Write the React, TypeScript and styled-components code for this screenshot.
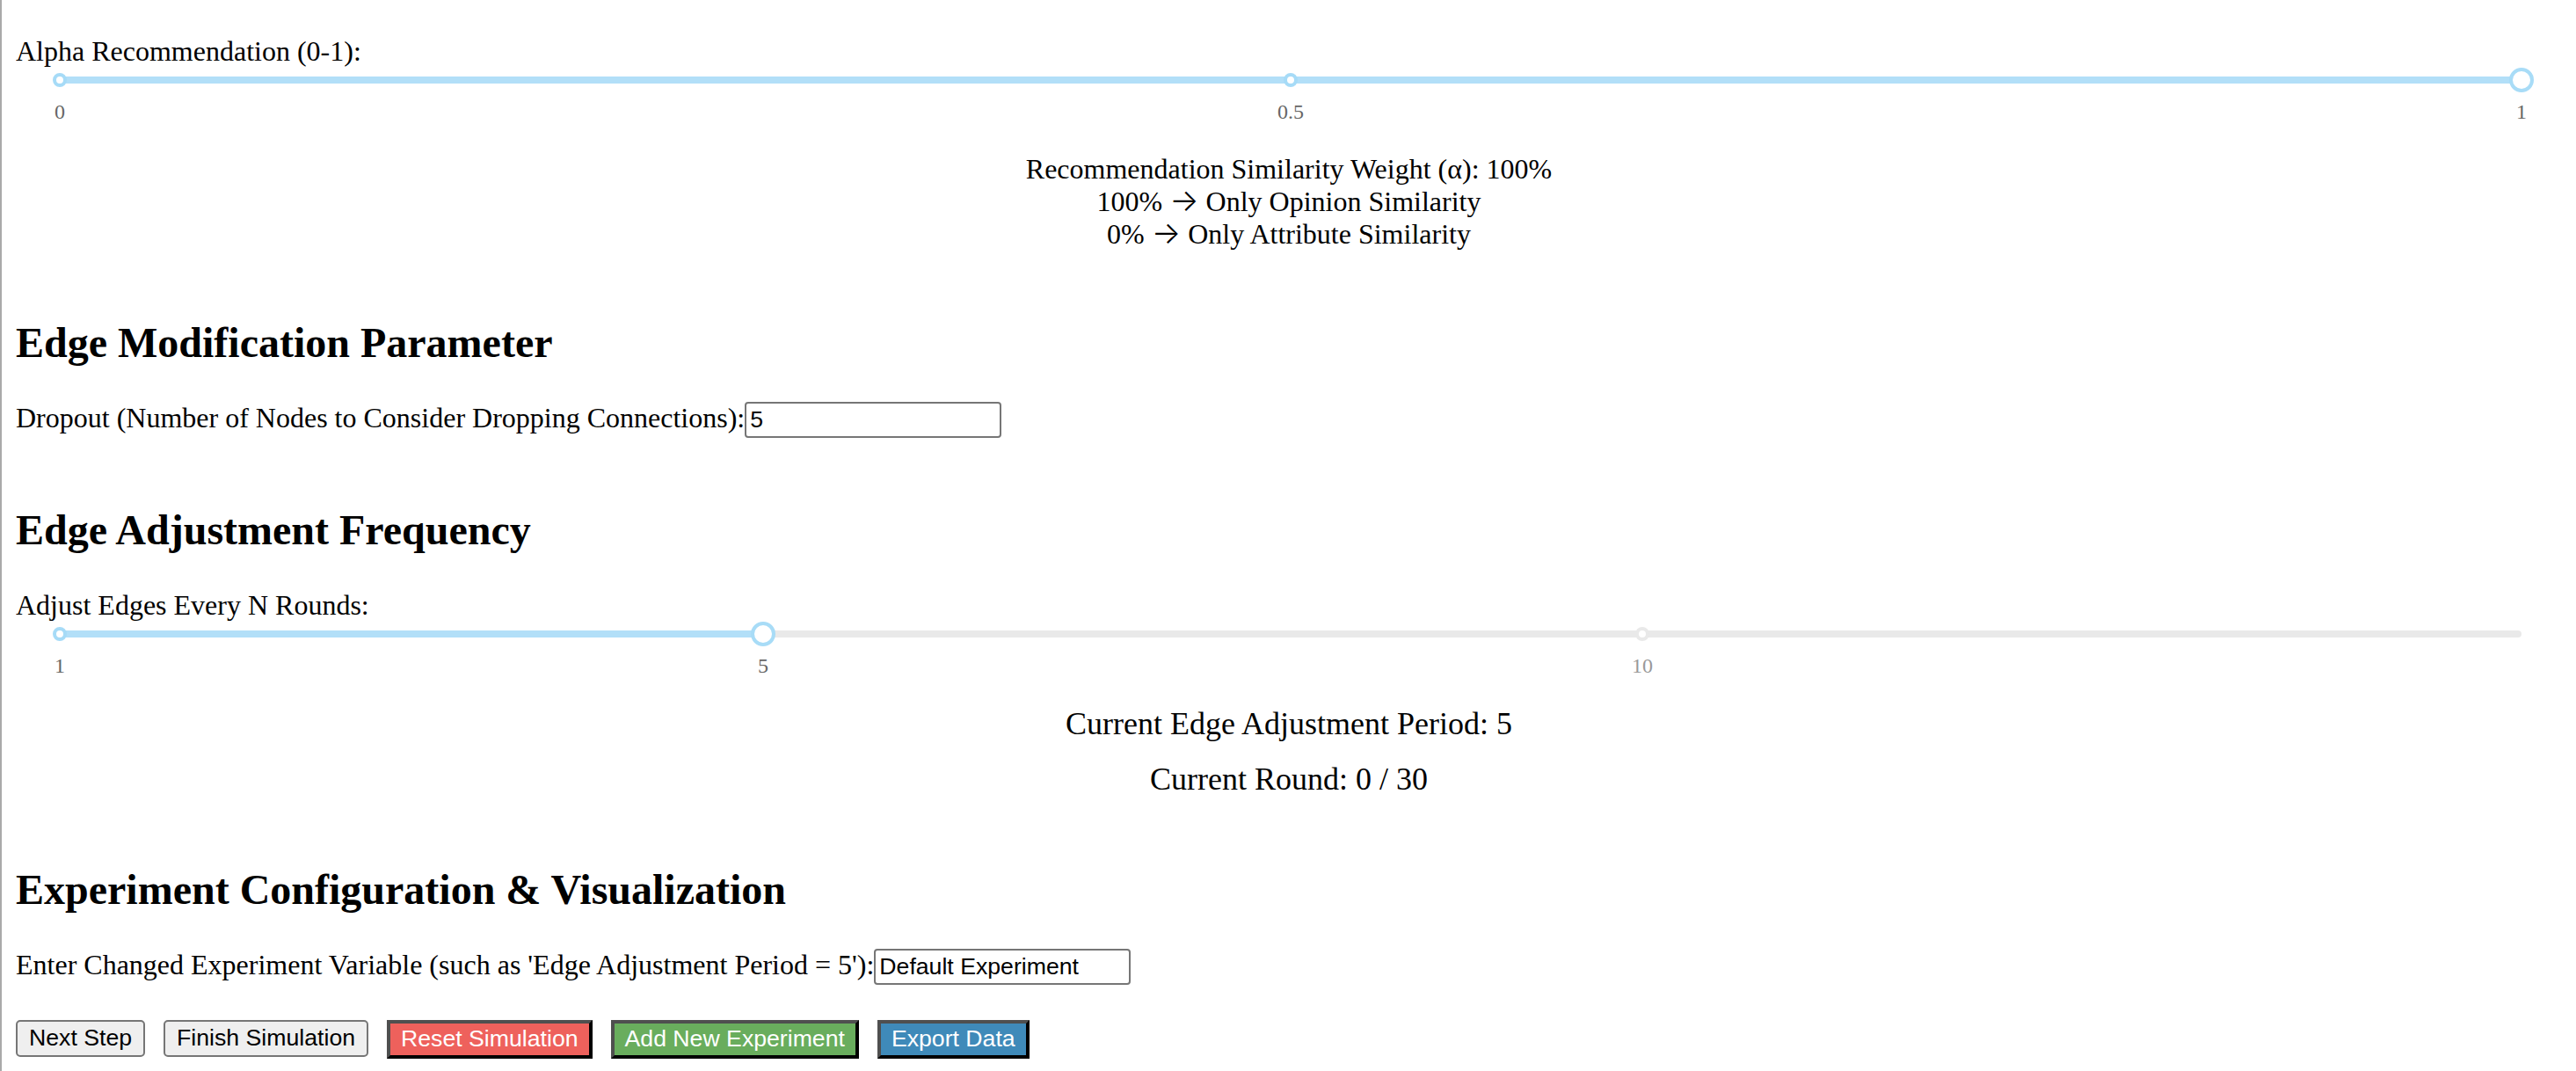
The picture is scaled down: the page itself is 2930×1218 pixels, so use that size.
import React from 'react'
import styled, { createGlobalStyle, css } from 'styled-components'

const GlobalStyle = createGlobalStyle`
  html {
    border-left: 2px solid #a9a9a9;
    background: #fff;
  }
  body {
    margin: 16px;
    font-family: "Liberation Serif", "Times New Roman", serif;
    font-size: 32px;
    color: #000;
  }
`

const Page = styled.div`
  padding-top: 24px;
`

const FieldLabel = styled.label`
  display: block;
  font-size: 32px;
  line-height: normal;
`

const SliderRoot = styled.div`
  position: relative;
  box-sizing: border-box;
  height: 28px;
  padding: 10px 0;
  margin: 0 46px 0 50px;
`

const Rail = styled.div`
  position: absolute;
  left: 0;
  right: 0;
  top: 10px;
  height: 8px;
  border-radius: 12px;
  background: #e9e9e9;
`

const Track = styled.div`
  position: absolute;
  left: 0;
  top: 10px;
  height: 8px;
  border-radius: 12px;
  background: #b2dff8;
`

const Dot = styled.span<{ $active: boolean }>`
  position: absolute;
  top: 6px;
  width: 16px;
  height: 16px;
  margin-left: -8px;
  box-sizing: border-box;
  border-radius: 50%;
  background: #fff;
  border: 4px solid ${(p) => (p.$active ? '#a6dbf7' : '#e9e9e9')};
`

const Handle = styled.div`
  position: absolute;
  top: 0;
  width: 28px;
  height: 28px;
  margin-left: -14px;
  box-sizing: border-box;
  border-radius: 50%;
  background: #fff;
  border: 4px solid #a8dcf7;
`

const MarkText = styled.span<{ $active: boolean }>`
  position: absolute;
  top: 37px;
  transform: translateX(-50%);
  font-size: 24px;
  line-height: normal;
  color: ${(p) => (p.$active ? '#666' : '#999')};
`

type SliderProps = {
  min: number
  max: number
  value: number
  marks: number[]
}

const Slider = ({ min, max, value, marks }: SliderProps) => {
  const pct = (v: number) => ((v - min) / (max - min)) * 100
  return (
    <SliderRoot>
      <Rail />
      <Track style={{ width: `${pct(value)}%` }} />
      {marks.map((m) => (
        <Dot key={`dot-${m}`} $active={m <= value} style={{ left: `${pct(m)}%` }} />
      ))}
      <Handle style={{ left: `${pct(value)}%` }} />
      {marks.map((m) => (
        <MarkText key={`mark-${m}`} $active={m <= value} style={{ left: `${pct(m)}%` }}>
          {m}
        </MarkText>
      ))}
    </SliderRoot>
  )
}

const Description = styled.div`
  margin-top: 69px;
  text-align: center;
  font-size: 32px;
  line-height: normal;
`

// thin, long arrow like the one in Times
const Arrow = styled.span`
  font-family: Inter, "DejaVu Sans", sans-serif;
  font-weight: 300;
  font-size: 35px;
  line-height: 0;
`

const SectionTitle = styled.h2`
  margin: 77px 0 40px;
  font-size: 48px;
  font-weight: bold;
  line-height: normal;
`

const FieldRow = styled.div<{ $offset?: number }>`
  margin-top: ${(p) => p.$offset ?? 0}px;
  font-size: 32px;
  line-height: normal;
`

const TextInput = styled.input`
  box-sizing: border-box;
  width: 292px;
  height: 41px;
  padding: 2px 4px;
  border: 2px solid #767676;
  border-radius: 4px;
  font-family: "Liberation Sans", Arial, sans-serif;
  font-size: 26.67px;
  color: #000;
  background: #fff;
  vertical-align: baseline;
  outline: none;
`

const StatusBlock = styled.div`
  margin-top: 67px;
  display: flex;
  flex-direction: column;
  align-items: center;
  gap: 21px;
`

const StatusLine = styled.p`
  margin: 0;
  font-size: 36px;
  line-height: normal;
`

const ButtonRow = styled.div`
  margin-top: 40px;
  display: flex;
  align-items: flex-start;
  gap: 21px;
`

type Tone = 'red' | 'green' | 'blue'

const toneColors: Record<Tone, string> = {
  red: '#ee615c',
  green: '#69ad5d',
  blue: '#3f8ab9',
}

const ActionButton = styled.button<{ $tone?: Tone }>`
  font-family: "Liberation Sans", Arial, sans-serif;
  font-size: 26.67px;
  line-height: normal;
  cursor: pointer;
  ${(p) =>
    p.$tone
      ? css`
          padding: 2px 12px 3px;
          color: #fff;
          background: ${toneColors[p.$tone]};
          border-style: solid;
          border-width: 4px;
          border-color: #4f4f4f #000 #000 #4f4f4f;
          border-radius: 0;
        `
      : css`
          padding: 3px 13px 4px;
          color: #000;
          background: #efefef;
          border: 2px solid #767676;
          border-radius: 5px;
        `}
`

export default function App() {
  return (
    <Page>
      <GlobalStyle />
      <FieldLabel>Alpha Recommendation (0-1):</FieldLabel>
      <Slider min={0} max={1} value={1} marks={[0, 0.5, 1]} />
      <Description>
        Recommendation Similarity Weight (α): 100%
        <br />
        100% <Arrow>→</Arrow> Only Opinion Similarity
        <br />
        0% <Arrow>→</Arrow> Only Attribute Similarity
      </Description>

      <SectionTitle>Edge Modification Parameter</SectionTitle>
      <FieldRow>
        Dropout (Number of Nodes to Consider Dropping Connections):
        <TextInput type="number" defaultValue={5} />
      </FieldRow>

      <SectionTitle>Edge Adjustment Frequency</SectionTitle>
      <FieldLabel>Adjust Edges Every N Rounds:</FieldLabel>
      <Slider min={1} max={15} value={5} marks={[1, 5, 10]} />
      <StatusBlock>
        <StatusLine>Current Edge Adjustment Period: 5</StatusLine>
        <StatusLine>Current Round: 0 / 30</StatusLine>
      </StatusBlock>

      <SectionTitle>Experiment Configuration &amp; Visualization</SectionTitle>
      <FieldRow $offset={3}>
        Enter Changed Experiment Variable (such as 'Edge Adjustment Period = 5'):
        <TextInput type="text" defaultValue="Default Experiment" />
      </FieldRow>
      <ButtonRow>
        <ActionButton>Next Step</ActionButton>
        <ActionButton>Finish Simulation</ActionButton>
        <ActionButton $tone="red">Reset Simulation</ActionButton>
        <ActionButton $tone="green">Add New Experiment</ActionButton>
        <ActionButton $tone="blue">Export Data</ActionButton>
      </ButtonRow>
    </Page>
  )
}
